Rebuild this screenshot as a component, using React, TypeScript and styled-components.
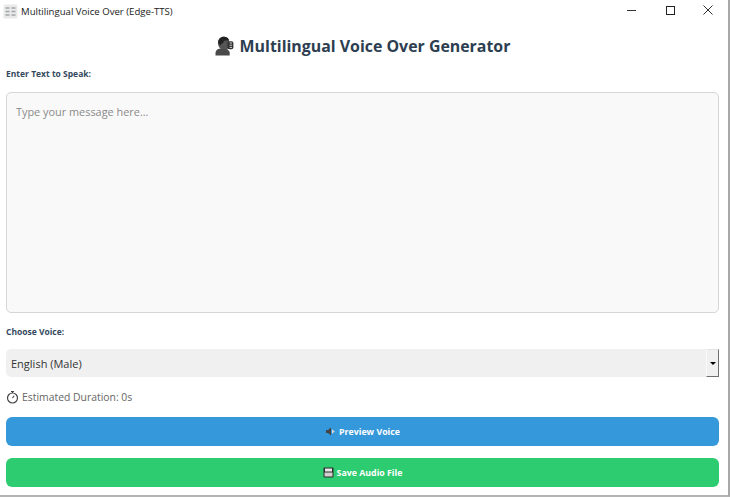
import React from "react";
import styled, { createGlobalStyle } from "styled-components";

const Global = createGlobalStyle`
  html, body { margin: 0; padding: 0; background: #fff; }
  body { font-family: "Open Sans", "Noto Sans", "Liberation Sans", sans-serif; overflow: hidden; }
  * { box-sizing: border-box; }
`;

const Frame = styled.div`
  width: 730px; height: 497px; background: #fff; display: flex; flex-direction: column;
  border-right: 2px solid #a8a8a8; border-bottom: 2px solid #b4b4b4;
`;
const TitleBar = styled.div`
  height: 22px; display: flex; align-items: center; padding-left: 3px; flex: none;
`;
const AppIcon = styled.svg`width: 15px; height: 15px; flex: none; margin-right: 3px;`;
const WindowTitle = styled.span`font-size: 9.6px; color: #222; white-space: nowrap;`;
const WindowControls = styled.div`margin-left: auto; display: flex; align-items: center; gap: 24px; padding-right: 13px;`;
const CtrlIcon = styled.svg`width: 14px; height: 14px; display: block;`;

const Content = styled.main`flex: 1; display: flex; flex-direction: column; padding: 0 9px 0 6px;`;
const Heading = styled.h1`
  margin: 11px 0 0; height: 26px; display: flex; align-items: center; justify-content: center; gap: 6px;
  font-size: 15.9px; font-weight: 700; color: #2c3e50; line-height: 26px;
`;
const Emoji = styled.svg`width: 19px; height: 20px; flex: none;`;
const Label = styled.label`display: block; font-size: 8.5px; font-weight: 700; color: #34495e; line-height: 14px;`;
const TextLabel = styled(Label)`margin-top: 8px;`;
const VoiceLabel = styled(Label)`margin-top: 12px;`;
const TextBox = styled.textarea`
  display: block; width: 100%; height: 221px; margin-top: 11px; resize: none; outline: none;
  border: 1px solid #d6d6d6; border-radius: 5px; background: #f9f9f9; padding: 11px 9px;
  font: 400 10.9px "Open Sans", "Noto Sans", sans-serif; color: #333;
  &::placeholder { color: #8a8a8a; opacity: 1; }
`;
const SelectRow = styled.div`display: flex; height: 28px; margin-top: 10px;`;
const VoiceSelect = styled.select`
  flex: 1; appearance: none; border: none; outline: none; background: #f0f0f0; border-radius: 5px 0 0 5px;
  padding: 0 5px; font: 400 11px "Open Sans", "Noto Sans", sans-serif; color: #333;
`;
const ArrowButton = styled.div`
  width: 13px; background: #f0f0f0; display: flex; align-items: center; justify-content: center;
  border-right: 1px solid #6f6f6f; border-bottom: 1px solid #6f6f6f; border-top: 1px solid #e4e4e4; border-left: 1px solid #fafafa;
`;
const Arrow = styled.span`
  width: 0; height: 0; border-left: 3px solid transparent; border-right: 3px solid transparent; border-top: 3px solid #000;
`;
const Duration = styled.div`
  display: flex; align-items: center; gap: 3px; height: 16px; margin-top: 12px;
  font-size: 10.4px; color: #666;
`;
const Stopwatch = styled.svg`width: 13px; height: 14px; flex: none;`;
const ActionButton = styled.button<{ $bg: string }>`
  display: flex; align-items: center; justify-content: center; gap: 3px; width: 100%; height: 29px; border: none;
  border-radius: 6px; background: ${p => p.$bg}; color: #fff; padding: 0;
  font: 700 8.8px "Open Sans", "Noto Sans", sans-serif;
`;
const PreviewButton = styled(ActionButton)`margin-top: 12px;`;
const SaveButton = styled(ActionButton)`margin-top: 12px;`;
const BtnIcon = styled.svg`width: 11px; height: 11px; flex: none;`;

export default function App() {
  return (
    <Frame>
      <Global />
      <TitleBar>
        <AppIcon viewBox="0 0 15 15">
          <rect x="0.5" y="0.5" width="14" height="14" rx="1.5" fill="#e9e9e9" />
          <path d="M2.5 4h4M8.5 4h4M2.5 7.5h4M8.5 7.5h4M2.5 11h4M8.5 11h4" stroke="#a2a6a8" strokeWidth="1.4" />
        </AppIcon>
        <WindowTitle>Multilingual Voice Over (Edge-TTS)</WindowTitle>
        <WindowControls>
          <CtrlIcon viewBox="0 0 14 14"><path d="M2 6.5h9" stroke="#333" strokeWidth="1" /></CtrlIcon>
          <CtrlIcon viewBox="0 0 14 14"><rect x="3.5" y="2.5" width="8" height="8" fill="none" stroke="#222" strokeWidth="1" /></CtrlIcon>
          <CtrlIcon viewBox="0 0 14 14"><path d="M2.5 1.5l9 9M11.5 1.5l-9 9" stroke="#333" strokeWidth="1" /></CtrlIcon>
        </WindowControls>
      </TitleBar>
      <Content>
        <Heading>
          <Emoji viewBox="0 0 19 20">
            <path d="M0.5 19.5v-2.6c0-2.5 2.2-3.9 4.6-4.3l3.4-.4c2.6.2 5.6 1.4 6.2 4.2v3.1z" fill="#4a4a4a" />
            <path d="M3 7.5C2.8 3.5 5.5.8 9 .8c2.7 0 4.6 1.5 5.1 3.8v7l-2 1.6H7.2C4.6 12.6 3.1 10.6 3 7.5z" fill="#555" />
            <path d="M3.2 7.2C2.8 3.5 5.5.8 9 .8c2.6 0 4.4 1.4 5 3.4L9 4.8 7.8 7.6 6.4 7.4 5.6 9.5z" fill="#222" />
            <rect x="12.4" y="5.2" width="6" height="8" rx="1.8" fill="#333" />
            <path d="M14.6 7h2.4M14.6 9.2h2.4M14.6 11.4h2.4" stroke="#ddd" strokeWidth="0.9" />
          </Emoji>
          Multilingual Voice Over Generator
        </Heading>
        <TextLabel htmlFor="t">Enter Text to Speak:</TextLabel>
        <TextBox id="t" placeholder="Type your message here..." />
        <VoiceLabel htmlFor="v">Choose Voice:</VoiceLabel>
        <SelectRow>
          <VoiceSelect id="v" defaultValue="en"><option value="en">English (Male)</option></VoiceSelect>
          <ArrowButton><Arrow /></ArrowButton>
        </SelectRow>
        <Duration>
          <Stopwatch viewBox="0 0 13 14">
            <circle cx="6.5" cy="8" r="5" fill="none" stroke="#444" strokeWidth="1.2" />
            <path d="M5 1.5h3M6.5 1.5v1.5M6.5 8l1.6-2.2" stroke="#444" strokeWidth="1.1" fill="none" />
          </Stopwatch>
          Estimated Duration: 0s
        </Duration>
        <PreviewButton $bg="#3498db">
          <BtnIcon viewBox="0 0 11 11">
            <path d="M1 4h2l3-2.5v8L3 7H1z" fill="#444" />
            <path d="M7 3.2l2.8 2.3L7 7.8z" fill="#d8d8d8" />
          </BtnIcon>
          Preview Voice
        </PreviewButton>
        <SaveButton $bg="#2ecc71">
          <BtnIcon viewBox="0 0 11 11">
            <rect x="0.5" y="0.5" width="10" height="10" rx="1" fill="#2b2b2b" />
            <rect x="2" y="1.5" width="7" height="3" fill="#e8e8e8" />
            <rect x="1.5" y="5.5" width="8" height="4" fill="#d0d0d0" />
          </BtnIcon>
          Save Audio File
        </SaveButton>
      </Content>
    </Frame>
  );
}
